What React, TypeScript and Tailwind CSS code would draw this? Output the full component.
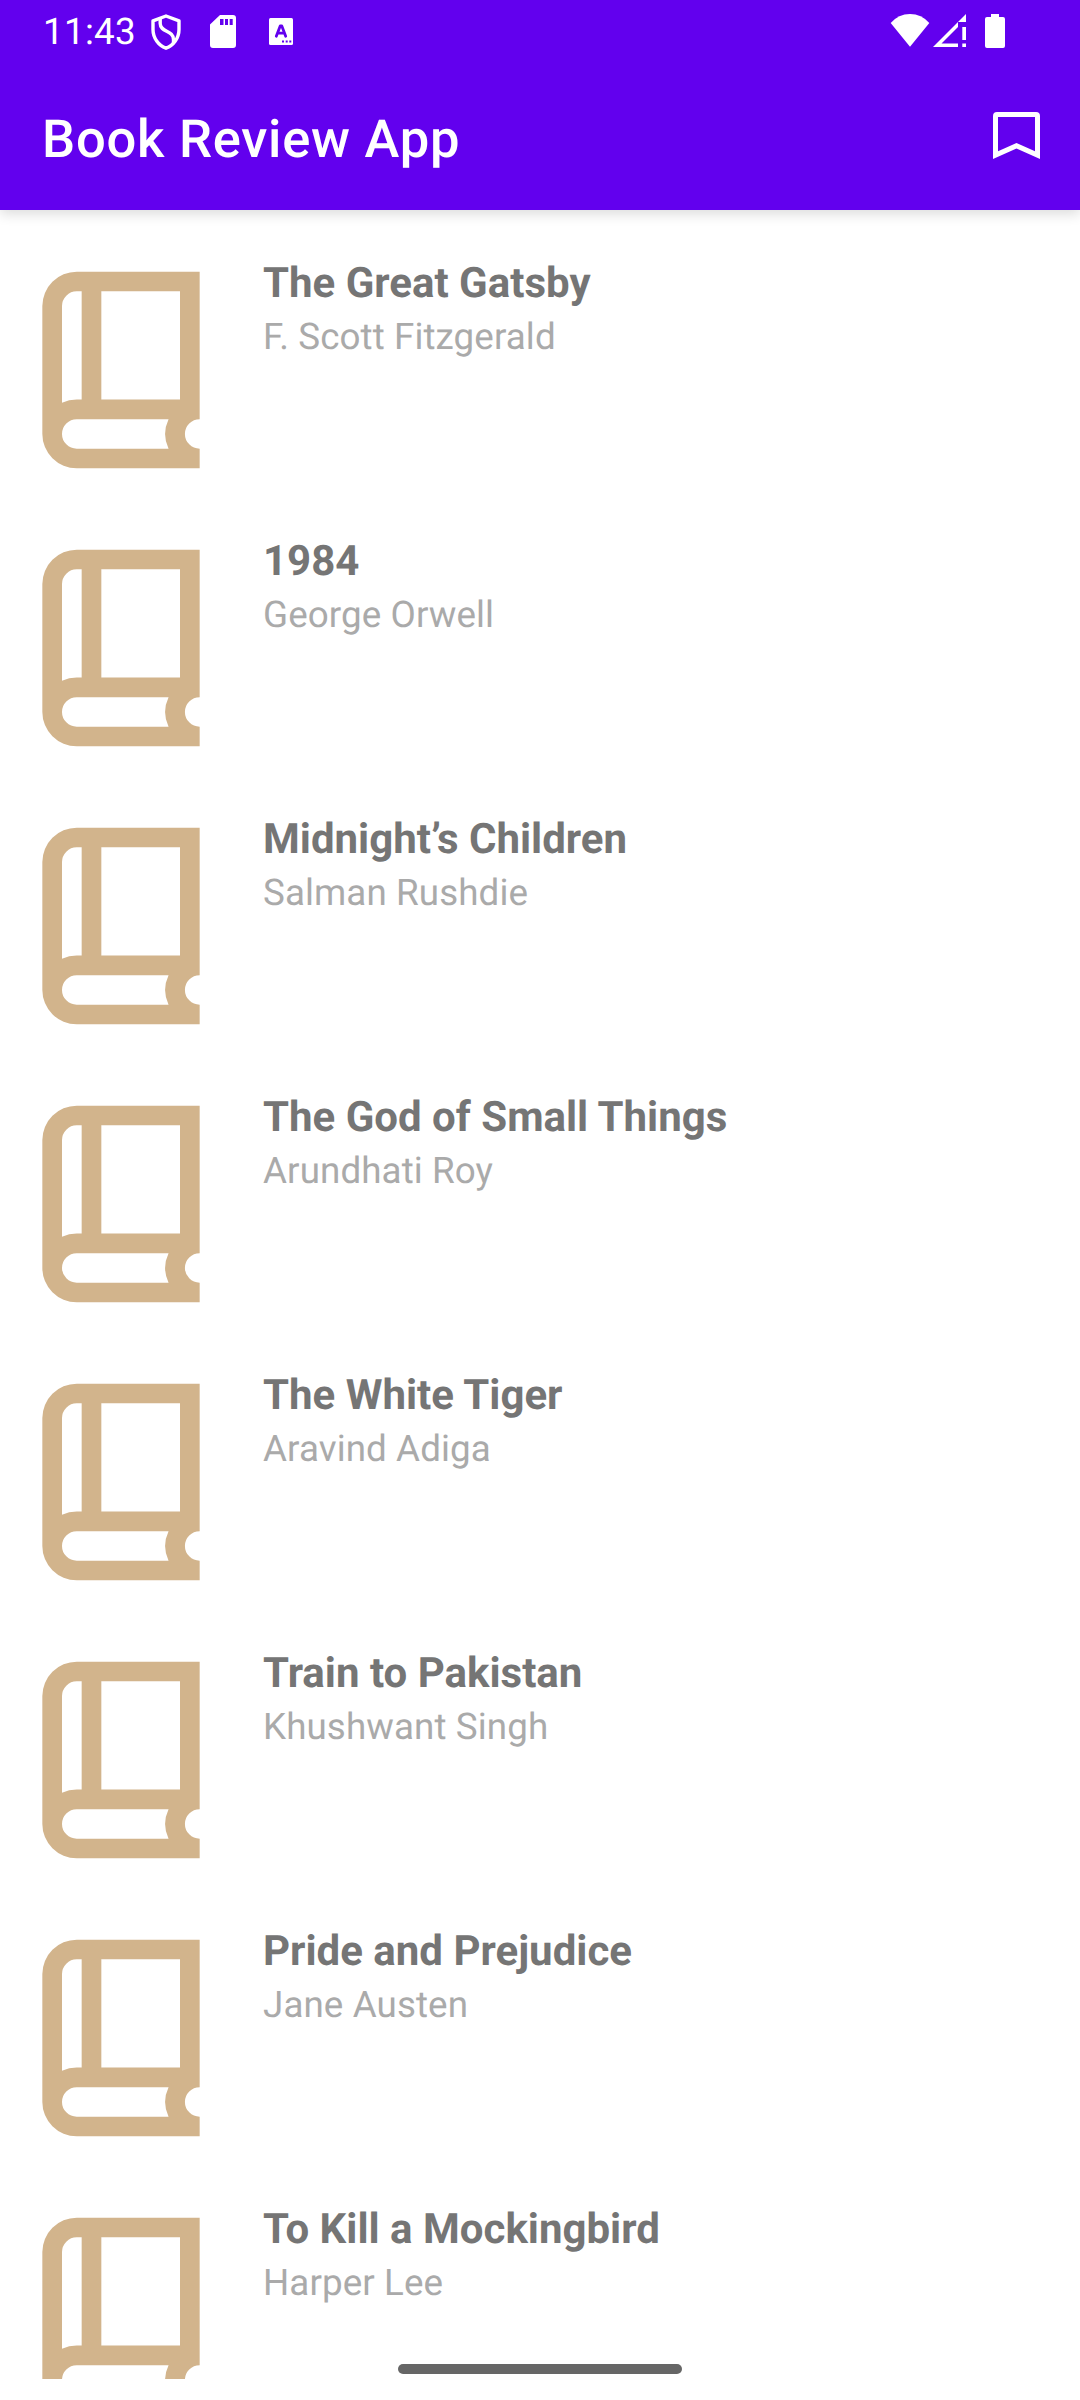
const books = [
  { title: 'The Great Gatsby', author: 'F. Scott Fitzgerald' },
  { title: '1984', author: 'George Orwell' },
  { title: 'Midnight’s Children', author: 'Salman Rushdie' },
  { title: 'The God of Small Things', author: 'Arundhati Roy' },
  { title: 'The White Tiger', author: 'Aravind Adiga' },
  { title: 'Train to Pakistan', author: 'Khushwant Singh' },
  { title: 'Pride and Prejudice', author: 'Jane Austen' },
  { title: 'To Kill a Mockingbird', author: 'Harper Lee' },
];

function BookIcon() {
  return (
    <svg viewBox="0 0 16 24" className="h-[236px] w-[158px] shrink-0 text-[#d2b48c]" fill="currentColor">
      <path
        fillRule="evenodd"
        d="M3.5 2H16V17A1.5 1.5 0 0 0 16 20V22H3.5A3.5 3.5 0 0 1 0 18.5V5.5A3.5 3.5 0 0 1 3.5 2ZM3.5 4A1.5 1.5 0 0 0 2 5.5V15.337A3.5 3.5 0 0 1 3.5 15H4V4ZM6 4V15H14V4ZM3.5 17A1.5 1.5 0 0 0 3.5 20H12.837A3.5 3.5 0 0 1 12.837 17Z"
      />
    </svg>
  );
}

function StatusBar() {
  return (
    <div className="flex h-[63px] items-start text-white">
      <span className="ml-[43px] mt-[10px] w-[93px] text-[36.75px] leading-[43px] tracking-[0.3px] whitespace-nowrap">11:43</span>
      <svg viewBox="0 0 30 36" className="ml-[14.5px] mt-[13.5px] h-[36px] w-[30px]" fill="none" stroke="currentColor" strokeWidth="3.4" strokeLinejoin="round">
        <path d="M15 2L28 6.8V15.5C28 24 22.5 31.5 15 34.2C7.5 31.5 2 24 2 15.5V6.8Z" />
        <path d="M9.2 4.4V9.5C9.2 18.5 22.5 16 22.5 25.5V29" />
      </svg>
      <svg viewBox="0 0 26 33" className="ml-[29.5px] mt-[15px] h-[33px] w-[26px]" fill="currentColor">
        <path fillRule="evenodd" d="M10 0H23Q26 0 26 3V30Q26 33 23 33H3Q0 33 0 30V9.5ZM10 4V10H13.5V4ZM15 4V10H18V4ZM19.7 4V10H22.7V4Z" />
      </svg>
      <svg viewBox="0 0 24 27" className="ml-[33px] mt-[18px] h-[27px] w-[24px]" fill="none">
        <rect width="24" height="27" rx="1.5" fill="currentColor" />
        <path d="M7.3 18.3L11.2 8H12.8L16.7 18.3M8.8 15.2H15.2" stroke="#6200ee" strokeWidth="2.8" strokeLinecap="round" strokeLinejoin="round" />
        <path d="M13 23.5H15M16.7 23.5H18.7M20.3 23.5H22.3" stroke="#6200ee" strokeWidth="2" />
      </svg>
      <svg viewBox="0 0 40 33" className="ml-auto mt-[14px] h-[33px] w-[40px]" fill="currentColor">
        <path d="M0.7 9Q8.5 0 20 0T39.3 9L20 32.7Z" />
      </svg>
      <svg viewBox="0 0 33 33" className="ml-[3px] mt-[14px] h-[33px] w-[33px]" fill="currentColor">
        <path fillRule="evenodd" d="M33 0V8H25V13L8.5 29.5H25V33H0ZM29.3 13H33V26H29.3ZM29.3 29.5H33V33H29.3Z" />
      </svg>
      <svg viewBox="0 0 20 34" className="ml-[19px] mr-[75px] mt-[14px] h-[34px] w-[20px]" fill="currentColor">
        <path d="M6 0H14V3H18Q20 3 20 5V32Q20 34 18 34H2Q0 34 0 32V5Q0 3 2 3H6Z" />
      </svg>
    </div>
  );
}

export default function App() {
  return (
    <div className="relative flex h-[2400px] w-[1080px] flex-col overflow-hidden bg-white font-['Roboto',sans-serif] [text-rendering:geometricPrecision]">
      <header className="z-10 h-[210px] shrink-0 bg-[#6200ee] shadow-[0_4px_12px_rgba(0,0,0,0.14)]">
        <StatusBar />
        <div className="flex h-[147px] items-start text-white">
          <h1 className="ml-[42px] mt-[45px] text-[52.5px] font-medium leading-[62px] tracking-[0.75px] whitespace-nowrap">Book Review App</h1>
          <svg viewBox="0 0 47 47" className="ml-auto mr-[40px] mt-[49px] h-[47px] w-[47px]" fill="currentColor">
            <path fillRule="evenodd" d="M4 0H43Q47 0 47 4V47L23.5 36.5L0 47V4Q0 0 4 0ZM5 5V39.2L23.5 31L42 39.2V5Z" />
          </svg>
        </div>
      </header>
      <main className="h-[2169px] shrink-0 overflow-hidden pt-[21px]">
        {books.map((book) => (
          <article key={book.title} className="flex h-[278px] items-start px-[42px] pt-[21px]">
            <BookIcon />
            <div className="ml-[63px] whitespace-nowrap">
              <h2 className="mt-[7px] text-[42px] font-bold leading-[49px] text-[#757575]">{book.title}</h2>
              <p className="mt-[7px] text-[36.75px] leading-[43px] tracking-[0.1px] text-[#aaaaaa]">{book.author}</p>
            </div>
          </article>
        ))}
      </main>
      <div className="absolute bottom-[26px] left-[398px] h-[10px] w-[284px] rounded-full bg-[#666666]" />
    </div>
  );
}
